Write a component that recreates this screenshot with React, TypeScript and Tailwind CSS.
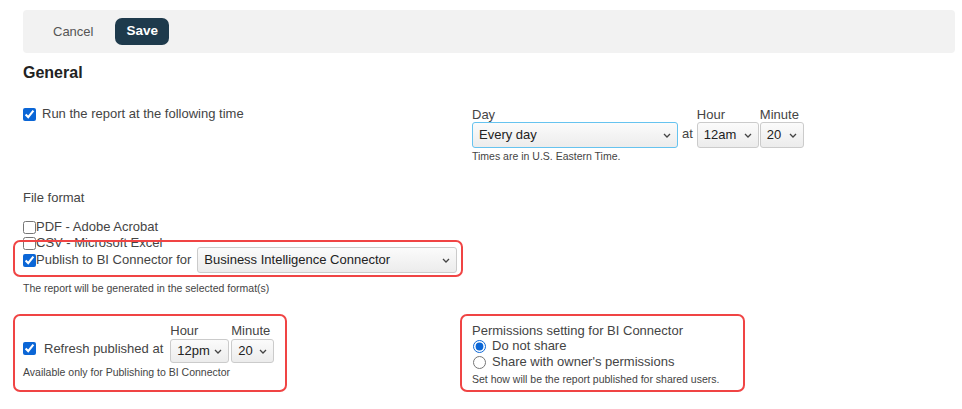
import clsx from 'clsx';

/* small chevron used in the fake selects */
function Chevron() {
  return (
    <svg width="8" height="5" viewBox="0 0 8 5" className="shrink-0">
      <polyline points="1,1 4,4 7,1" fill="none" stroke="#444" strokeWidth="1.3" />
    </svg>
  );
}

type SelectProps = {
  value: string;
  className?: string;
  focused?: boolean;
};

function Select({ value, className, focused }: SelectProps) {
  return (
    <div
      className={clsx(
        'flex items-center justify-between rounded-[3px] border bg-gradient-to-b from-[#fbfbfb] to-[#ececec] pl-[6px] pr-[6px] text-[13px] text-[#222]',
        focused ? 'border-[#66c3ef]' : 'border-[#cbcbcb]',
        className
      )}
    >
      <span>{value}</span>
      <Chevron />
    </div>
  );
}

/* red highlight frame drawn over a block */
function Frame({ className }: { className: string }) {
  return (
    <span
      className={clsx(
        'pointer-events-none absolute rounded-[7px] border-2 border-[#f04444]',
        className
      )}
    />
  );
}

export default function App() {
  return (
    <div className="h-[409px] w-[962px] overflow-hidden bg-white pl-[23px] pr-[7px] pt-[10px] font-['Liberation_Sans',Arial,sans-serif] text-[13px] text-[#444]">
      {/* -------------- toolbar ------------------------------ */}
      <div className="flex h-[43px] items-center gap-[22px] rounded-[4px] bg-[#f2f2f2] pl-[30px]">
        <span className="text-[#555]">Cancel</span>
        <button className="h-[27px] rounded-[7px] bg-[#1e3a4c] px-[11px] text-[13.5px] font-bold text-white">
          Save
        </button>
      </div>

      <h2 className="mt-[10px] text-[16px] font-bold leading-[20px] text-[#222]">General</h2>

      {/* -------------- schedule --------------------------------- */}
      <div className="mt-[24px] grid grid-cols-[449px_1fr]">
        <label className="flex h-[14px] items-center gap-[6px]">
          <input type="checkbox" defaultChecked className="m-0 h-[13px] w-[13px] accent-[#0b66d6]" />
          <span>Run the report at the following time</span>
        </label>

        <div>
          <div className="flex items-end">
            <div className="flex flex-col">
              <span className="leading-[15px]">Day</span>
              <Select value="Every day" focused className="h-[26px] w-[206px]" />
            </div>
            <span className="mx-[4px] mb-[5px]">at</span>
            <div className="flex flex-col">
              <span className="leading-[15px]">Hour</span>
              <Select value="12am" className="h-[26px] w-[62px]" />
            </div>
            <div className="ml-[1px] flex flex-col">
              <span className="leading-[15px]">Minute</span>
              <Select value="20" className="h-[26px] w-[44px]" />
            </div>
          </div>
          <p className="mt-[2px] text-[10.5px] leading-[12px]">Times are in U.S. Eastern Time.</p>
        </div>
      </div>

      {/* -------------- file format ------------------------------ */}
      <p className="mt-[29px] leading-[14px]">File format</p>

      <div className="mt-[14px] flex flex-col">
        <label className="flex h-[16px] items-center">
          <input type="checkbox" className="m-0 h-[13px] w-[13px] accent-[#0b66d6]" />
          <span>PDF - Adobe Acrobat</span>
        </label>
        <label className="flex h-[16px] items-center">
          <input type="checkbox" className="m-0 h-[13px] w-[13px] accent-[#0b66d6]" />
          <span>CSV - Microsoft Excel</span>
        </label>
        <div className="relative -mt-[4px] flex h-[26px] items-center">
          <input type="checkbox" defaultChecked className="m-0 h-[13px] w-[13px] accent-[#0b66d6]" />
          <span>Publish to BI Connector for</span>
          <Select value="Business Intelligence Connector" className="ml-[6px] h-[26px] w-[260px]" />
          <Frame className="-bottom-[4px] -left-[10px] -top-[7px] w-[450px]" />
        </div>
      </div>

      <p className="mt-[9px] text-[10.5px] leading-[12px]">
        The report will be generated in the selected format(s)
      </p>

      {/* -------------- BI connector options --------------------- */}
      <div className="mt-[29px] grid grid-cols-[449px_1fr]">
        <div className="relative w-[252px]">
          <div className="flex items-end">
            <label className="mb-[5px] flex items-center gap-[8px]">
              <input type="checkbox" defaultChecked className="m-0 h-[13px] w-[13px] accent-[#0b66d6]" />
              <span>Refresh published at</span>
            </label>
            <div className="ml-[7px] flex flex-col">
              <span className="leading-[16px]">Hour</span>
              <Select value="12pm" className="h-[24px] w-[59px]" />
            </div>
            <div className="ml-[2px] flex flex-col">
              <span className="leading-[16px]">Minute</span>
              <Select value="20" className="h-[24px] w-[43px]" />
            </div>
          </div>
          <p className="mt-[3px] text-[10.5px] leading-[12px]">Available only for Publishing to BI Connector</p>
          <Frame className="-bottom-[7px] -left-[10px] -top-[9px] w-[274px]" />
        </div>

        <div className="relative w-[263px]">
          <p className="leading-[15px]">Permissions setting for BI Connector</p>
          <label className="flex h-[16px] items-center gap-[6px]">
            <input type="radio" name="perm" defaultChecked className="m-0 ml-[1px] h-[13px] w-[13px] accent-[#0b66d6]" />
            <span>Do not share</span>
          </label>
          <label className="flex h-[16px] items-center gap-[6px]">
            <input type="radio" name="perm" className="m-0 ml-[1px] h-[13px] w-[13px] accent-[#0b66d6]" />
            <span>Share with owner's permissions</span>
          </label>
          <p className="mt-[3px] text-[10.5px] leading-[12px]">Set how will be the report published for shared users.</p>
          <Frame className="-bottom-[7px] -left-[12px] -top-[9px] w-[285px]" />
        </div>
      </div>
    </div>
  );
}
